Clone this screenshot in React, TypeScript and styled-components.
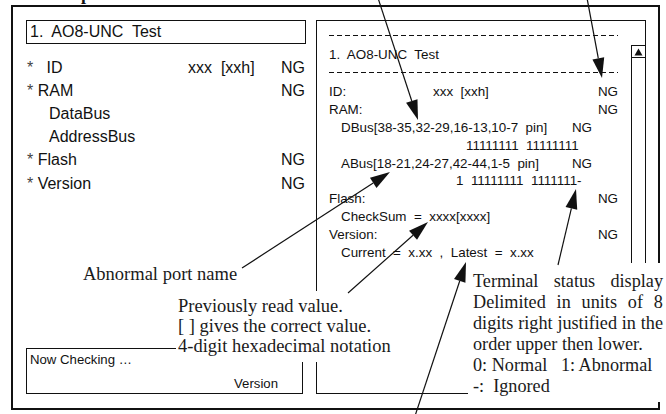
import React from "react";
import styled, { createGlobalStyle } from "styled-components";

const Global = createGlobalStyle`
  html, body { margin: 0; padding: 0; background: #fff; }
  body {
    width: 666px;
    height: 414px;
    overflow: hidden;
    font-family: "Liberation Sans", Arial, sans-serif;
    color: #111;
  }
`;

const Page = styled.div`
  position: relative;
  width: 666px;
  height: 414px;
  overflow: hidden;
  background: #fff;
`;

const Caption = styled.div`
  height: 5px;
  overflow: hidden;
  padding-left: 36px;
  font: bold 18px/18px "Liberation Serif", "Times New Roman", serif;
  color: #111;
`;

const CaptionText = styled.span`
  display: block;
  margin-top: -15px;
`;

const Frame = styled.div`
  box-sizing: border-box;
  margin-left: 11px;
  width: 649px;
  height: 405px;
  border: 2px solid #111;
  display: flex;
  gap: 10px;
  padding: 13px 12px 14px 13px;
`;

const LeftCol = styled.div`
  width: 280px;
  display: flex;
  flex-direction: column;
`;

const TitleBox = styled.div`
  box-sizing: border-box;
  height: 24px;
  border: 1px solid #111;
  padding-left: 3px;
  font-size: 16px;
  line-height: 22px;
  white-space: pre;
`;

const List = styled.div`
  margin-top: 12px;
  display: flex;
  flex-direction: column;
`;

const LRow = styled.div<{ $indent?: number }>`
  display: grid;
  grid-template-columns: 161px 1fr auto;
  align-items: center;
  height: 23.2px;
  font-size: 16px;
  white-space: pre;
  padding-left: ${(p) => p.$indent ?? 1}px;
  padding-right: 1px;
`;

const Star = styled.span`
  color: #444;
`;

const StatusBox = styled.div`
  box-sizing: border-box;
  margin-top: auto;
  width: 277px;
  height: 46px;
  border: 1px solid #111;
  padding: 3px 24px 1px 3px;
  display: flex;
  flex-direction: column;
  font-size: 13.2px;
  line-height: 16px;
`;

const StatusRight = styled.div`
  margin-top: auto;
  text-align: right;
`;

const Panel = styled.div`
  box-sizing: border-box;
  width: 330px;
  border: 1px solid #111;
  display: flex;
`;

const PanelBody = styled.div`
  width: 289px;
  margin: 0 13px 0 12px;
  padding-top: 14px;
  font-size: 13.4px;
  display: flex;
  flex-direction: column;
`;

const Dashed = styled.div`
  height: 1px;
  background: repeating-linear-gradient(to right, #111 0 5px, transparent 5px 8px);
`;

const PanelTitle = styled.div`
  height: 36px;
  display: flex;
  align-items: center;
  white-space: pre;
`;

const PRows = styled.div`
  margin-top: 10px;
  display: flex;
  flex-direction: column;
`;

const PRow = styled.div<{ $indent?: number; $right?: number }>`
  display: flex;
  align-items: center;
  height: 17.8px;
  white-space: pre;
  padding-left: ${(p) => p.$indent ?? 0}px;
  padding-right: ${(p) => p.$right ?? 0}px;
`;

const PLabel = styled.span<{ $w?: number }>`
  width: ${(p) => (p.$w ? `${p.$w}px` : "auto")};
  flex: none;
`;

const Fill = styled.span`
  flex: 1;
`;

const Scrollbar = styled.div`
  width: 14px;
  margin-top: 24px;
  border-left: 1px solid #111;
  box-sizing: border-box;
`;

const ScrollButton = styled.div`
  height: 13px;
  box-sizing: border-box;
  border-top: 1px solid #111;
  border-bottom: 1px solid #111;
  display: flex;
  align-items: center;
  justify-content: center;
`;

const Callout = styled.div<{
  $left: number;
  $top: number;
  $width?: number;
  $height?: number;
  $lh?: number;
  $size?: number;
  $pad?: string;
}>`
  position: absolute;
  left: ${(p) => p.$left}px;
  top: ${(p) => p.$top}px;
  ${(p) => (p.$width ? `width: ${p.$width}px;` : "")}
  ${(p) => (p.$height ? `height: ${p.$height}px;` : "")}
  box-sizing: border-box;
  padding: ${(p) => p.$pad ?? "0"};
  background: #fff;
  font-family: "Liberation Serif", "Times New Roman", serif;
  font-size: ${(p) => p.$size ?? 18.5}px;
  line-height: ${(p) => p.$lh ?? 20}px;
  color: #1a1a1a;
  white-space: pre;
`;

const CalloutLine = styled.div`
  white-space: pre;
`;

const JustLine = styled.div`
  display: flex;
  justify-content: space-between;
  white-space: pre;
`;

function Justified({ text }: { text: string }) {
  return (
    <JustLine>
      {text.split(" ").map((w, i) => (
        <span key={i}>{w}</span>
      ))}
    </JustLine>
  );
}

const Overlay = styled.svg`
  position: absolute;
  left: 0;
  top: 0;
  pointer-events: none;
`;

type Arrow = { x1: number; y1: number; x2: number; y2: number };

const arrows: Arrow[] = [
  { x1: 378, y1: -2, x2: 418, y2: 120 },
  { x1: 587, y1: -2, x2: 602, y2: 78 },
  { x1: 242, y1: 268, x2: 390, y2: 172 },
  { x1: 348, y1: 293, x2: 428, y2: 222 },
  { x1: 558, y1: 265, x2: 576, y2: 189 },
  { x1: 415, y1: 416, x2: 466, y2: 262 },
];

function ArrowShape({ a }: { a: Arrow }) {
  const L = 20;
  const W = 6;
  const dx = a.x2 - a.x1;
  const dy = a.y2 - a.y1;
  const len = Math.hypot(dx, dy);
  const ux = dx / len;
  const uy = dy / len;
  const bx = a.x2 - ux * L;
  const by = a.y2 - uy * L;
  const px = -uy;
  const py = ux;
  const pts = `${a.x2},${a.y2} ${bx + px * W},${by + py * W} ${bx - px * W},${by - py * W}`;
  return (
    <g>
      <line x1={a.x1} y1={a.y1} x2={bx} y2={by} stroke="#111" strokeWidth={1.2} />
      <polygon points={pts} fill="#111" />
    </g>
  );
}

export default function App() {
  return (
    <Page>
      <Global />
      <Caption>
        <CaptionText>Example</CaptionText>
      </Caption>
      <Frame>
        <LeftCol>
          <TitleBox>{"1.  AO8-UNC  Test"}</TitleBox>
          <List>
            <LRow>
              <span>
                <Star>*</Star>
                {"   ID"}
              </span>
              <span>{"xxx  [xxh]"}</span>
              <span>NG</span>
            </LRow>
            <LRow>
              <span>
                <Star>*</Star>
                {" RAM"}
              </span>
              <span />
              <span>NG</span>
            </LRow>
            <LRow $indent={23}>
              <span>DataBus</span>
              <span />
              <span />
            </LRow>
            <LRow $indent={23}>
              <span>AddressBus</span>
              <span />
              <span />
            </LRow>
            <LRow>
              <span>
                <Star>*</Star>
                {" Flash"}
              </span>
              <span />
              <span>NG</span>
            </LRow>
            <LRow>
              <span>
                <Star>*</Star>
                {" Version"}
              </span>
              <span />
              <span>NG</span>
            </LRow>
          </List>
          <StatusBox>
            <div>Now Checking …</div>
            <StatusRight>Version</StatusRight>
          </StatusBox>
        </LeftCol>
        <Panel>
          <PanelBody>
            <Dashed />
            <PanelTitle>{"1.  AO8-UNC  Test"}</PanelTitle>
            <Dashed />
            <PRows>
              <PRow>
                <PLabel $w={104}>ID:</PLabel>
                <span>{"xxx  [xxh]"}</span>
                <Fill />
                <span>NG</span>
              </PRow>
              <PRow>
                <PLabel>RAM:</PLabel>
                <Fill />
                <span>NG</span>
              </PRow>
              <PRow $indent={12} $right={26}>
                <PLabel>{"DBus[38-35,32-29,16-13,10-7  pin]"}</PLabel>
                <Fill />
                <span>NG</span>
              </PRow>
              <PRow $indent={137}>
                <span>{"11111111  11111111"}</span>
              </PRow>
              <PRow $indent={12} $right={26}>
                <PLabel>{"ABus[18-21,24-27,42-44,1-5  pin]"}</PLabel>
                <Fill />
                <span>NG</span>
              </PRow>
              <PRow $indent={127}>
                <span>{"1  11111111  1111111-"}</span>
              </PRow>
              <PRow>
                <PLabel>Flash:</PLabel>
                <Fill />
                <span>NG</span>
              </PRow>
              <PRow $indent={12}>
                <span>{"CheckSum  =  xxxx[xxxx]"}</span>
              </PRow>
              <PRow>
                <PLabel>Version:</PLabel>
                <Fill />
                <span>NG</span>
              </PRow>
              <PRow $indent={12}>
                <span>{"Current  =  x.xx  ,  Latest  =  x.xx"}</span>
              </PRow>
            </PRows>
          </PanelBody>
          <Scrollbar>
            <ScrollButton>
              <svg width="9" height="8" viewBox="0 0 9 8">
                <polygon points="4.5,0.5 8.5,7.5 0.5,7.5" fill="#111" />
              </svg>
            </ScrollButton>
          </Scrollbar>
        </Panel>
      </Frame>

      <Callout $left={83} $top={264}>
        Abnormal port name
      </Callout>

      <Callout $left={176} $top={291} $width={224} $height={71} $pad="5px 0 0 2px">
        <CalloutLine>Previously read value.</CalloutLine>
        <CalloutLine>[ ] gives the correct value.</CalloutLine>
        <CalloutLine>4-digit hexadecimal notation</CalloutLine>
      </Callout>

      <Callout
        $left={468}
        $top={263}
        $width={198}
        $height={139}
        $lh={21}
        $size={18.2}
        $pad="8px 3px 0 5px"
      >
        <Justified text="Terminal status display" />
        <Justified text="Delimited in units of 8" />
        <Justified text="digits right justified in the" />
        <CalloutLine>order upper then lower.</CalloutLine>
        <CalloutLine>{"0: Normal   1: Abnormal"}</CalloutLine>
        <CalloutLine>{"-:  Ignored"}</CalloutLine>
      </Callout>

      <Overlay width={666} height={414} viewBox="0 0 666 414">
        {arrows.map((a, i) => (
          <ArrowShape key={i} a={a} />
        ))}
      </Overlay>
    </Page>
  );
}
